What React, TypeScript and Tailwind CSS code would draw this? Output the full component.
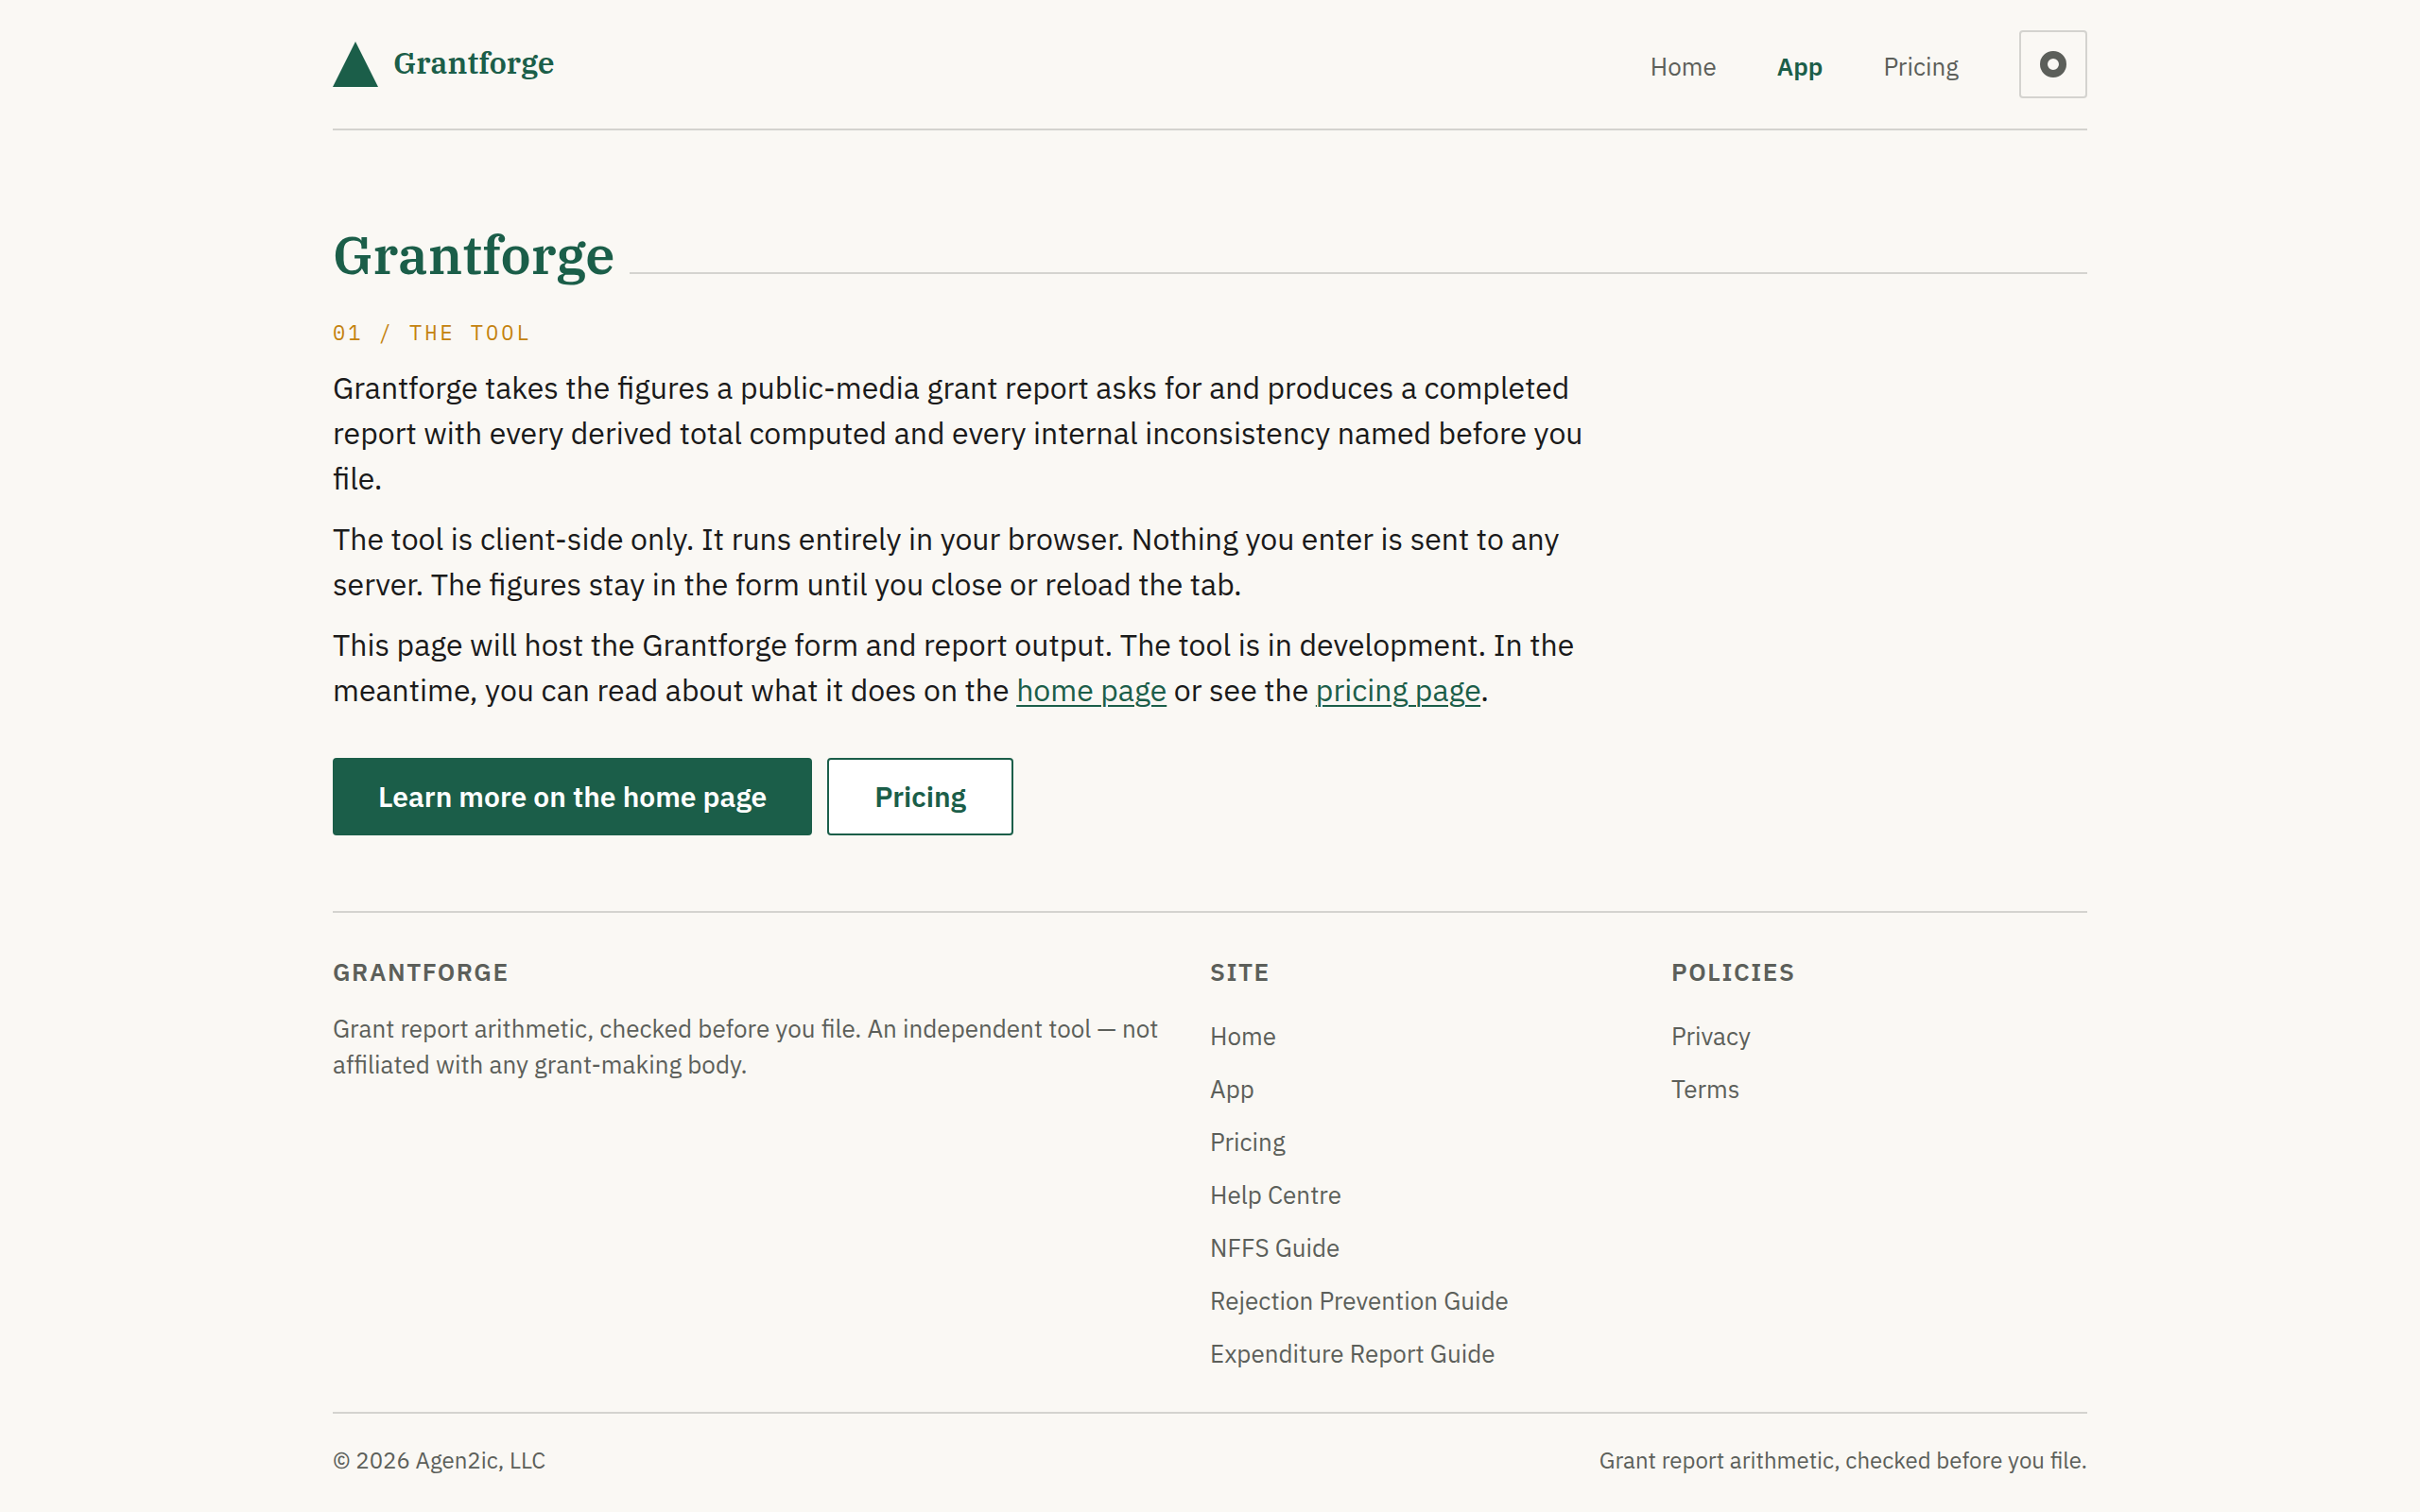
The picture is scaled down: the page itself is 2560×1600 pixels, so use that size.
const topNav = [
  { label: "Home", href: "#home" },
  { label: "App", href: "#app" },
  { label: "Pricing", href: "#pricing" }
];

const footerColumns = [
  {
    title: "Site",
    links: [
      { label: "Home", href: "#home" },
      { label: "App", href: "#app" },
      { label: "Pricing", href: "#pricing" },
      { label: "Help Centre", href: "#help" },
      { label: "NFFS Guide", href: "#nffs-guide" },
      { label: "Rejection Prevention Guide", href: "#rejection-guide" },
      { label: "Expenditure Report Guide", href: "#expenditure-guide" }
    ]
  },
  {
    title: "Policies",
    links: [
      { label: "Privacy", href: "#privacy" },
      { label: "Terms", href: "#terms" }
    ]
  }
];

const serif = "font-['IBM_Plex_Serif','Liberation_Serif',serif]";
const footerHeading = "text-[26px] leading-[44px] font-semibold tracking-[0.06em] uppercase";

function Header() {
  return (
    <header className="flex items-center justify-between border-b-2 border-[#d4d3cf] py-8">
      <a href="#home" className="flex items-start gap-4 text-[#1b5e49]">
        <svg viewBox="0 0 48 48" className="h-12 w-12" fill="currentColor" aria-hidden="true">
          <path d="M24 0 48 48H0Z" />
        </svg>
        <span className={`text-[32px] leading-[44px] font-semibold ${serif}`}>Grantforge</span>
      </a>
      <div className="flex items-center gap-16">
        <nav className="flex gap-16 pt-1 text-[26px] leading-[40px]">
          {topNav.map((item) => (
            <a key={item.href} href={item.href} className={item.label === "App" ? "font-semibold text-[#1b5e49]" : ""}>
              {item.label}
            </a>
          ))}
        </nav>
        <button type="button" aria-label="Toggle theme" className="grid h-[72px] w-[72px] place-items-center rounded-sm border-2 border-[#d4d3cf]">
          <svg viewBox="0 0 28 28" className="h-7 w-7" fill="none" stroke="currentColor" strokeWidth="8" aria-hidden="true">
            <circle cx="14" cy="14" r="10" />
          </svg>
        </button>
      </div>
    </header>
  );
}

function Footer() {
  return (
    <footer className="mt-20 border-t-2 border-[#d4d3cf] pt-10">
      <div className="grid grid-cols-[2fr_1fr_1fr] gap-12">
        <div>
          <h2 className={footerHeading}>Grantforge</h2>
          <p className="mt-[19px] text-[26px] leading-[38px]">
            Grant report arithmetic, checked before you file. An independent tool — not affiliated with any grant-making body.
          </p>
        </div>
        {footerColumns.map((column) => (
          <nav key={column.title} aria-label={column.title}>
            <h2 className={footerHeading}>{column.title}</h2>
            <ul className="mt-[26px] flex flex-col gap-4 text-[26px] leading-[40px]">
              {column.links.map((link) => (
                <li key={link.href}>
                  <a href={link.href}>{link.label}</a>
                </li>
              ))}
            </ul>
          </nav>
        ))}
      </div>
      <div className="mt-[42px] flex justify-between border-t-2 border-[#d4d3cf] py-8 text-[24px] leading-[34px]">
        <p>© 2026 Agen2ic, LLC</p>
        <p>Grant report arithmetic, checked before you file.</p>
      </div>
    </footer>
  );
}

export default function App() {
  return (
    <div className="min-h-dvh bg-[#faf8f4] font-['IBM_Plex_Sans',Roboto,sans-serif] text-[#5c5f5a]">
      <div className="mx-auto max-w-[1920px] px-8">
        <Header />
        <main className="pt-24">
          <div className="flex items-baseline gap-4">
            <h1 className={`text-[56px] leading-[70px] font-semibold text-[#1b5e49] ${serif}`}>Grantforge</h1>
            <span className="h-0.5 flex-1 bg-[#d4d3cf]" />
          </div>
          <p className="mt-8 font-['IBM_Plex_Mono','Liberation_Mono',monospace] text-[22px] leading-[32px] tracking-[3px] text-[#c4820e] uppercase">
            01 / The tool
          </p>
          <div className="mt-[18px] flex max-w-[1360px] flex-col gap-4 text-[32px] leading-[48px] text-[#1a1a1a]">
            <p>
              Grantforge takes the figures a public-media grant report asks for and produces a completed report with every derived
              total computed and every internal inconsistency named before you file.
            </p>
            <p>
              The tool is client-side only. It runs entirely in your browser. Nothing you enter is sent to any server. The figures
              stay in the form until you close or reload the tab.
            </p>
            <p>
              This page will host the Grantforge form and report output. The tool is in development. In the meantime, you can read
              about what it does on the{" "}
              <a href="#home" className="text-[#1b5e49] underline decoration-2 underline-offset-4">home page</a> or see the{" "}
              <a href="#pricing" className="text-[#1b5e49] underline decoration-2 underline-offset-4">pricing page</a>.
            </p>
          </div>
          <div className="mt-12 flex gap-4 text-[30px] leading-[46px] font-semibold">
            <a href="#home" className="rounded-sm border-2 border-[#1b5e49] bg-[#1b5e49] px-[46px] py-4 text-white">
              Learn more on the home page
            </a>
            <a href="#pricing" className="rounded-sm border-2 border-[#1b5e49] bg-white px-12 py-4 text-[#1b5e49]">
              Pricing
            </a>
          </div>
        </main>
        <Footer />
      </div>
    </div>
  );
}
